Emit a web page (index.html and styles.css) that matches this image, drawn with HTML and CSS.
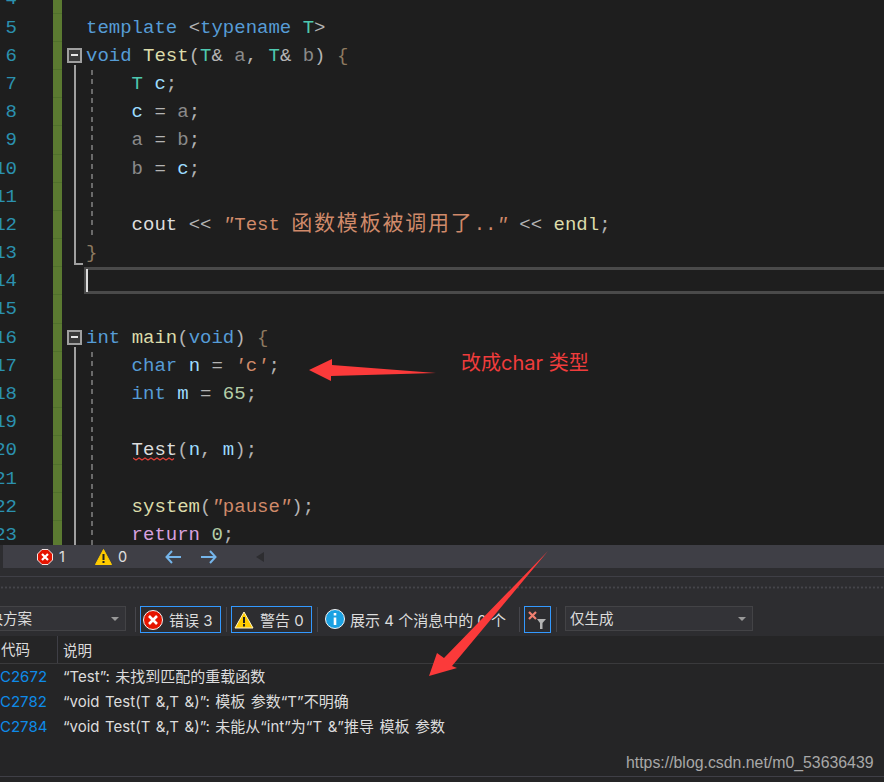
FILE: index.html
```html
<!DOCTYPE html>
<html lang="zh">
<head>
<meta charset="utf-8">
<title>Visual Studio 错误列表</title>
<link rel="stylesheet" href="styles.css">
</head>
<body>
<div class="app">
  <main class="editor">
    <div class="code">
      <div class="row"><span class="ln"><b>4</b></span><span class="bar"></span><span class="fold"></span><span class="src"></span></div>
      <div class="row"><span class="ln"><b>5</b></span><span class="bar"></span><span class="fold"></span><span class="src"><i class="k">template</i> <i class="p">&lt;</i><i class="k">typename</i> <i class="t">T</i><i class="p">&gt;</i></span></div>
      <div class="row"><span class="ln"><b>6</b></span><span class="bar"></span><span class="fold head"><em class="box"></em></span><span class="src"><i class="k">void</i> <i class="f">Test</i><i class="p">(</i><i class="t">T</i><i class="p">&amp;</i> <i class="a">a</i><i class="p">,</i> <i class="t">T</i><i class="p">&amp;</i> <i class="a">b</i><i class="p">)</i> <i class="br">{</i></span></div>
      <div class="row"><span class="ln"><b>7</b></span><span class="bar"></span><span class="fold line"></span><span class="src g">    <i class="t">T</i> <i class="v">c</i><i class="p">;</i></span></div>
      <div class="row"><span class="ln"><b>8</b></span><span class="bar"></span><span class="fold line"></span><span class="src g">    <i class="v">c</i> <i class="p">=</i> <i class="a">a</i><i class="p">;</i></span></div>
      <div class="row"><span class="ln"><b>9</b></span><span class="bar"></span><span class="fold line"></span><span class="src g">    <i class="a">a</i> <i class="p">=</i> <i class="a">b</i><i class="p">;</i></span></div>
      <div class="row"><span class="ln"><b>10</b></span><span class="bar"></span><span class="fold line"></span><span class="src g">    <i class="a">b</i> <i class="p">=</i> <i class="v">c</i><i class="p">;</i></span></div>
      <div class="row"><span class="ln"><b>11</b></span><span class="bar"></span><span class="fold line"></span><span class="src g"></span></div>
      <div class="row"><span class="ln"><b>12</b></span><span class="bar"></span><span class="fold line"></span><span class="src g">    <i class="w">cout</i> <i class="p">&lt;&lt;</i> <i class="s"><u>"</u>Test <span class="zh">函数模板被调用了</span>..<u>"</u></i> <i class="p">&lt;&lt;</i> <i class="f">endl</i><i class="p">;</i></span></div>
      <div class="row"><span class="ln"><b>13</b></span><span class="bar"></span><span class="fold end"></span><span class="src"><i class="br">}</i></span></div>
      <div class="row"><span class="ln"><b>14</b></span><span class="bar"></span><span class="fold"></span><span class="src current"><em class="caret"></em></span></div>
      <div class="row"><span class="ln"><b>15</b></span><span class="bar"></span><span class="fold"></span><span class="src"></span></div>
      <div class="row"><span class="ln"><b>16</b></span><span class="bar"></span><span class="fold head"><em class="box"></em></span><span class="src"><i class="k">int</i> <i class="f">main</i><i class="p">(</i><i class="k">void</i><i class="p">)</i> <i class="br">{</i></span></div>
      <div class="row"><span class="ln"><b>17</b></span><span class="bar"></span><span class="fold line"></span><span class="src g">    <i class="k">char</i> <i class="v">n</i> <i class="p">=</i> <i class="s"><u>'</u>c<u>'</u></i><i class="p">;</i></span></div>
      <div class="row"><span class="ln"><b>18</b></span><span class="bar"></span><span class="fold line"></span><span class="src g">    <i class="k">int</i> <i class="v">m</i> <i class="p">=</i> <i class="n">65</i><i class="p">;</i></span></div>
      <div class="row"><span class="ln"><b>19</b></span><span class="bar"></span><span class="fold line"></span><span class="src g"></span></div>
      <div class="row"><span class="ln"><b>20</b></span><span class="bar"></span><span class="fold line"></span><span class="src g">    <span class="squig"><i class="w">Test</i><svg class="wave" width="44" height="4" viewBox="0 0 44 4"><path d="M0 1l3 2 3-2 3 2 3-2 3 2 3-2 3 2 3-2 3 2 3-2 3 2 3-2 3 2 2-1.500" fill="none" stroke="#e0403a" stroke-width="1.300"/></svg></span><i class="p">(</i><i class="v">n</i><i class="p">,</i> <i class="v">m</i><i class="p">);</i></span></div>
      <div class="row"><span class="ln"><b>21</b></span><span class="bar"></span><span class="fold line"></span><span class="src g"></span></div>
      <div class="row"><span class="ln"><b>22</b></span><span class="bar"></span><span class="fold line"></span><span class="src g">    <i class="f">system</i><i class="p">(</i><i class="s"><u>"</u>pause<u>"</u></i><i class="p">);</i></span></div>
      <div class="row"><span class="ln"><b>23</b></span><span class="bar"></span><span class="fold line"></span><span class="src g">    <i class="r">return</i> <i class="n">0</i><i class="p">;</i></span></div>
    </div>
  </main>

  <div class="status">
    <span class="status-cap"></span>
    <span class="stat first">
      <svg class="ic16" viewBox="0 0 16 16"><path d="M5 .5h6L15.500 5v6L11 15.500H5L.5 11V5z" fill="#e51400" stroke="#f4e4e4" stroke-width="1"/><path d="M5 5l6 6M11 5l-6 6" stroke="#fff" stroke-width="2.200"/></svg>
      <span>1</span>
    </span>
    <span class="stat second">
      <svg class="ic17" viewBox="0 0 17 16"><path d="M8.500 0.500L16.500 15.500H.5z" fill="#ffcc00" stroke="#ffcc00" stroke-linejoin="round"/><path d="M8.500 5v6M8.500 12v2" stroke="#222" stroke-width="2"/></svg>
      <span>0</span>
    </span>
    <span class="nav">
      <svg width="16" height="14" viewBox="0 0 16 14"><path d="M7 1L1.500 7 7 13M2 7h14" fill="none" stroke="#75b5ea" stroke-width="2"/></svg>
      <svg width="16" height="14" viewBox="0 0 16 14"><path d="M9 1l5.500 6L9 13M14 7H0" fill="none" stroke="#75b5ea" stroke-width="2"/></svg>
      <span class="back"></span>
    </span>
  </div>

  <div class="strip"></div>

  <section class="panel">
    <div class="grip"></div>
    <div class="toolbar">
      <div class="select left"><span class="clip">解决方案</span><em class="drop"></em></div>
      <em class="sep"></em>
      <div class="btn on">
        <svg class="ic20" viewBox="0 0 20 20"><circle cx="10" cy="10" r="9.500" fill="#e51400" stroke="#f3f3f3" stroke-width="1"/><path d="M6 6l8 8M14 6l-8 8" stroke="#fff" stroke-width="2.600"/></svg>
        <span>错误 3</span>
      </div>
      <em class="sep"></em>
      <div class="btn on">
        <svg class="ic20" viewBox="0 0 20 18"><path d="M10 1l9 16H1z" fill="#ffcc00" stroke="#fff3c4" stroke-linejoin="round"/><path d="M10 6v6M10 13v2.500" stroke="#222" stroke-width="2"/></svg>
        <span>警告 0</span>
      </div>
      <em class="sep"></em>
      <div class="info">
        <svg class="ic20" viewBox="0 0 20 20"><circle cx="10" cy="10" r="9.500" fill="#1ba1e2" stroke="#f3f3f3" stroke-width="1"/><path d="M10 4v2.500M10 8.500V16" stroke="#fff" stroke-width="2.600"/></svg>
        <span>展示 4 个消息中的 0 个</span>
      </div>
      <em class="sep"></em>
      <div class="filter">
        <svg width="20" height="20" viewBox="0 0 20 20"><path d="M1 2l7 7M8 2L1 9" stroke="#f08070" stroke-width="2.200"/><path d="M9 9h9l-3.500 4v6h-2.500v-6z" fill="#b4b4b4"/></svg>
      </div>
      <em class="sep"></em>
      <div class="select right"><span>仅生成</span><em class="drop"></em></div>
    </div>
    <div class="thead"><span class="c1">代码</span><span class="c2">说明</span></div>
    <div class="tr"><span class="c1 code-link">C2672</span><span class="c2">“Test”: 未找到匹配的重载函数</span></div>
    <div class="tr"><span class="c1 code-link">C2782</span><span class="c2">“void Test(T &amp;,T &amp;)”: 模板 参数“T”不明确</span></div>
    <div class="tr"><span class="c1 code-link">C2784</span><span class="c2">“void Test(T &amp;,T &amp;)”: 未能从“int”为“T &amp;”推导 模板 参数</span></div>
    <div class="foot"></div>
  </section>

  <svg class="arrows" width="884" height="782" viewBox="0 0 884 782">
    <path d="M309 370L332 359V365L436 373L331 376V381z" fill="#fb3a3a"/>
    <path d="M548 551L452 666 457 668 429 676 437 653 444 658z" fill="#fb3a3a"/>
  </svg>
  <div class="note">改成char 类型</div>
  <div class="mark">https://blog.csdn.net/m0_53636439</div>
</div>
</body>
</html>
```
FILE: styles.css
```css
* { box-sizing: border-box; }
html, body { margin: 0; padding: 0; background: #252526; }
.app {
  position: relative;
  width: 884px;
  height: 782px;
  overflow: hidden;
  display: flex;
  flex-direction: column;
  font-family: "Inter", "Noto Sans CJK SC", sans-serif;
  font-size: 14.5px;
  color: #dcdcdc;
}
i, em, u { font-style: normal; text-decoration: none; }

/* editor */
.editor { height: 545px; flex: none; background: #1e1e1e; overflow: hidden; }
.code {
  margin-top: -14.600px;
  font-family: "Liberation Mono", "Noto Sans CJK SC", monospace;
  font-size: 19px;
  line-height: 28.2px;
}
.row { display: flex; height: 28.2px; }
.ln {
  width: 17px;
  margin-right: 36px;
  flex: none;
  display: flex;
  justify-content: flex-end;
  overflow: hidden;
  color: #2b91af;
}
.ln b { font-weight: normal; }
.bar {
  width: 9px;
  flex: none;
  background: #5b7a31;
  border-bottom: 1px solid #50702c;
}
.fold { width: 24px; flex: none; position: relative; }
.fold.line::before, .fold.head::before, .fold.end::before {
  content: "";
  position: absolute;
  left: 12px;
  top: 0;
  bottom: 0;
  width: 2px;
  background: #a0a0a0;
}
.fold.head::before { top: 23px; }
.fold.end::before { bottom: 2px; }
.fold.end::after {
  content: "";
  position: absolute;
  left: 12px;
  right: 3px;
  bottom: 2px;
  height: 2px;
  background: #a0a0a0;
}
.box {
  position: absolute;
  left: 5px;
  top: 6px;
  width: 15px;
  height: 15px;
  border: 2px solid #a0a0a0;
  background: #3a3a3a;
}
.box::after {
  content: "";
  position: absolute;
  left: 2px;
  right: 2px;
  top: 4px;
  height: 2px;
  background: #e6e6e6;
}
.src { flex: 1; white-space: pre; position: relative; color: #c8c8c8; }
.src.g::before {
  content: "";
  position: absolute;
  left: 5px;
  top: 0;
  bottom: 0;
  width: 2px;
  background: repeating-linear-gradient(to bottom, #6a6a6a 0 5px, transparent 5px 9.400px);
}
.current {
  margin-left: -2px;
  border: 3px solid #4a4a4a;
  border-right: 0;
  height: 27px;
}
.caret {
  position: absolute;
  left: -1px;
  top: -1px;
  bottom: -1px;
  width: 2px;
  background: #dcdcdc;
}
.k { color: #569cd6; }
.t { color: #4ec9b0; }
.f { color: #dcdcaa; }
.a { color: #8a8a8a; }
.v { color: #9cdcfe; }
.p { color: #b4b4b4; }
.br { color: #8d7a60; }
.s { color: #d08a6a; }
.s u { font-style: italic; }
.n { color: #b5cea8; }
.r { color: #d8a0df; }
.w { color: #dcdcdc; }
.zh { font-size: 21px; line-height: 0; letter-spacing: 1.800px; font-family: "Noto Sans CJK SC", sans-serif; }
.squig { position: relative; display: inline-block; }
.wave { position: absolute; left: 1px; top: 21px; display: block; }

/* status */
.status {
  height: 23px;
  flex: none;
  background: #3f3f46;
  display: flex;
  align-items: center;
  color: #e0e0e0;
  font-size: 14.5px;
}
.status-cap { width: 3px; height: 23px; background: #2d2d30; flex: none; }
.stat { display: flex; align-items: center; gap: 6px; }
.stat.first { margin-left: 34px; }
.stat.second { margin-left: 30px; }
.ic16 { width: 16px; height: 16px; flex: none; }
.ic17 { width: 17px; height: 16px; flex: none; }
.ic20 { width: 20px; height: 20px; flex: none; }
.nav { display: flex; align-items: center; gap: 20px; margin-left: 38px; }
.back {
  width: 0;
  height: 0;
  margin-left: 19px;
  border: 5.500px solid transparent;
  border-left: 0;
  border-right: 8px solid #2d2d30;
}

.strip { height: 9px; flex: none; background: #2d2d30; border-bottom: 1px solid #3f3f46; }

/* panel */
.panel { flex: 1; display: flex; flex-direction: column; background: #252526; min-height: 0; }
.grip {
  height: 15px;
  flex: none;
  background: #2d2d30 radial-gradient(circle, #45454a 1px, transparent 1.200px) 0 10px / 4px 3px repeat-x;
  background-size: 4px 3px;
  background-position: 0 9px;
  background-repeat: repeat-x;
}
.toolbar {
  height: 44px;
  flex: none;
  background: #2d2d30;
  display: flex;
  align-items: flex-start;
  padding-top: 14px;
}
.sep { width: 1px; height: 25px; background: #46464c; flex: none; margin: 1px 4px 0 5px; }
.select {
  height: 25px;
  display: flex;
  align-items: center;
  justify-content: space-between;
  background: #333337;
  border: 1px solid #434346;
  flex: none;
  overflow: hidden;
  line-height: 22px;
}
.select.left { width: 126px; margin-right: 4px; border-left: 0; }
.clip { margin-left: -26px; }
.select.right { width: 188px; margin-left: 4px; padding-left: 4px; }
.drop {
  width: 0;
  height: 0;
  margin-right: 6px;
  border: 4px solid transparent;
  border-bottom: 0;
  border-top: 4px solid #999;
}
.btn {
  width: 81px;
  height: 27px;
  display: flex;
  align-items: center;
  gap: 6px;
  padding-left: 2px;
  padding-bottom: 1px;
  border: 1px solid transparent;
  flex: none;
  font-size: 15px;
}
.btn svg { margin-top: 1px; }
.btn.on { border-color: #3399ff; }
.info { display: flex; align-items: center; gap: 5px; height: 27px; margin: 0 9px 0 3px; font-size: 15px; white-space: nowrap; padding-bottom: 1px; }
.info span { width: 155px; }
.filter {
  width: 27px;
  height: 27px;
  border: 1px solid #3399ff;
  display: flex;
  align-items: center;
  justify-content: center;
  flex: none;
}
.thead {
  height: 28px;
  flex: none;
  display: flex;
  align-items: center;
  border-bottom: 1px solid #3a3a3c;
  font-size: 14.5px;
}
.c1 { width: 58px; flex: none; overflow: hidden; white-space: nowrap; }
.thead .c1 { height: 27px; line-height: 27px; border-right: 1px solid #3f3f46; direction: rtl; padding-right: 27px; }
.c2 { padding-left: 5px; white-space: nowrap; word-spacing: 1.300px; }
.tr { height: 25px; padding-bottom: 2px; flex: none; display: flex; align-items: center; font-size: 15px; }
.code-link { color: #0e8be8; padding-top: 1px; }
.foot { margin-top: auto; height: 6px; border-top: 1px solid #3f3f46; }

/* annotations */
.arrows { position: absolute; left: 0; top: 0; pointer-events: none; }
.note {
  position: absolute;
  left: 461px;
  top: 348px;
  font-size: 20px;
  line-height: 30px;
  color: #f03c3c;
  white-space: nowrap;
}
.mark {
  position: absolute;
  left: 626px;
  top: 753px;
  font-family: "Liberation Sans", sans-serif;
  font-size: 15.850px;
  line-height: 20px;
  color: #a8a8a8;
  white-space: nowrap;
}
```
